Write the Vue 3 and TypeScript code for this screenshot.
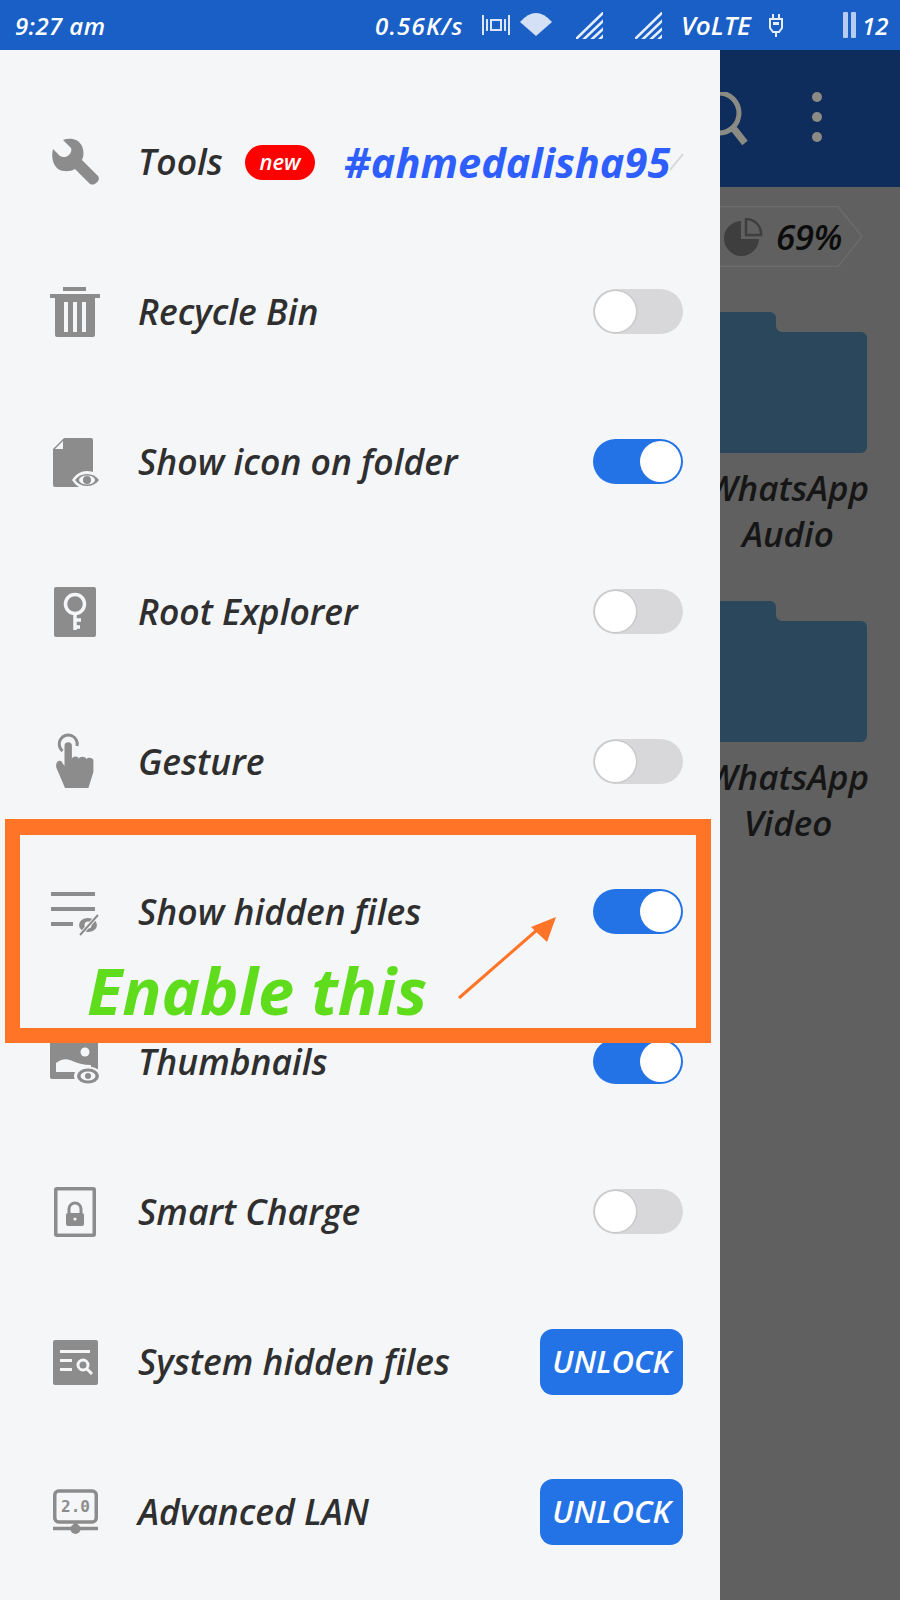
<script setup lang="ts">
type Kind = 'tools' | 'on' | 'off' | 'unlock'
interface Row { id: string; label: string; kind: Kind; width: number }
const rows: Row[] = [
  { id: 'tools', label: 'Tools', kind: 'tools', width: 82 },
  { id: 'bin', label: 'Recycle Bin', kind: 'off', width: 183 },
  { id: 'doc', label: 'Show icon on folder', kind: 'on', width: 318 },
  { id: 'key', label: 'Root Explorer', kind: 'off', width: 222 },
  { id: 'hand', label: 'Gesture', kind: 'off', width: 124 },
  { id: 'hidden', label: 'Show hidden files', kind: 'on', width: 283 },
  { id: 'thumb', label: 'Thumbnails', kind: 'on', width: 175 },
  { id: 'charge', label: 'Smart Charge', kind: 'off', width: 221 },
  { id: 'system', label: 'System hidden files', kind: 'unlock', width: 315 },
  { id: 'lan', label: 'Advanced LAN', kind: 'unlock', width: 238 }
]
const folders = [
  ['WhatsApp', 'Audio'],
  ['WhatsApp', 'Video']
]
</script>

<template>
  <div class="screen">
    <header class="status">
      <span class="st time">9:27 am</span>
      <span class="st speed">0.56K/s</span>
      <svg class="si vib" width="28" height="24" viewBox="0 0 28 24"><path d="M1 2v20M27 2v20M5 6v12M23 6v12" stroke="#dbe6f8" stroke-width="2" fill="none"/><rect x="9" y="7" width="10" height="10" fill="none" stroke="#dbe6f8" stroke-width="2"/></svg>
      <svg class="si wifi" width="32" height="24" viewBox="0 0 32 24"><path d="M0 9Q16-9 32 9L16 23z" fill="#d3e0f5"/></svg>
      <svg class="si sig1" width="27" height="27" viewBox="0 0 27 27"><path d="M-1 28 28 0M7 28 28 8M15 28 28 16M23 28l5-5" stroke="#e6eefb" stroke-width="2.600" fill="none"/></svg>
      <svg class="si sig2" width="27" height="27" viewBox="0 0 27 27"><path d="M-1 28 28 0M7 28 28 8M15 28 28 16M23 28l5-5" stroke="#e6eefb" stroke-width="2.600" fill="none"/></svg>
      <span class="st volte">VoLTE</span>
      <svg class="si plug" width="16" height="24" viewBox="0 0 16 24"><path d="M5 1v5M11 1v5M8 19v5" stroke="#e6eefb" stroke-width="2"/><path d="M2 6h12v9l-3 4H5l-3-4z" fill="none" stroke="#e6eefb" stroke-width="2"/><rect x="5" y="9" width="6" height="3" fill="#e6eefb"/></svg>
      <span class="bars"><i></i><i></i></span>
      <span class="st level">12</span>
    </header>

    <div class="body">
      <nav class="drawer">
        <div v-for="row in rows" :key="row.id" class="row">
          <svg class="icon" width="60" height="60" viewBox="0 0 60 60" fill="#8c8c8c">
            <template v-if="row.id === 'tools'">
              <path d="M17 8C24 5 33 7 36 14C38 19 38 24 36 28L52 44C54 47 52 50 50 51C48 53 45 53 43 51L29 37C24 40 17 40 12 37C7 33 5 25 7 17L14 24C17 26 21 25 23 23C25 21 26 18 25 16Z"/>
            </template>
            <template v-else-if="row.id === 'bin'">
              <rect x="17" y="5" width="23" height="4"/>
              <rect x="4" y="12" width="50" height="4"/>
              <path d="M9 16h40v37a2 2 0 0 1-2 2H11a2 2 0 0 1-2-2z"/>
              <path d="M18 20h4v30h-4zM27 20h4v30h-4zM36 20h4v30h-4z" fill="#f5f6f8"/>
            </template>
            <template v-else-if="row.id === 'doc'">
              <path d="M18 6h27a2 2 0 0 1 2 2v45a2 2 0 0 1-2 2H9a2 2 0 0 1-2-2V17z"/>
              <path d="M17 9v8H9z" fill="#f5f6f8"/>
              <path d="M26 48c4-6 9-9 15-9s11 3 15 9c-4 6-9 9-15 9s-11-3-15-9z" fill="#f5f6f8"/>
              <path d="M29 48c3-4 7-6 12-6s9 2 12 6c-3 4-7 6-12 6s-9-2-12-6z"/>
              <ellipse cx="41" cy="48" rx="8" ry="4.500" fill="#f5f6f8"/>
              <circle cx="41" cy="48" r="4"/>
            </template>
            <template v-else-if="row.id === 'key'">
              <rect x="8" y="5" width="42" height="50" rx="2"/>
              <circle cx="29" cy="22" r="9.500" fill="none" stroke="#f5f6f8" stroke-width="3.500"/>
              <path d="M29 31v17M29 38h6M29 45h5" fill="none" stroke="#f5f6f8" stroke-width="3.500"/>
            </template>
            <template v-else-if="row.id === 'hand'">
              <path d="M16.500 19A9 9 0 1 1 31 14" fill="none" stroke="#8c8c8c" stroke-width="3"/>
              <path d="M18.500 14a3.700 3.700 0 0 1 7.400 0V27c0-3.500 7-3.500 7 0c0-3 7.500-3 7.500 .5c0-2.500 7-2.500 7 1V40l-5 16H19L10.500 36c-1-3 0-6 2-7 2-.5 3 0 4 2l2 3z"/>
            </template>
            <template v-else-if="row.id === 'hidden'">
              <path d="M5 10h44v4H5zM5 25h44v4H5zM5 40h22v4H5z"/>
              <ellipse cx="42" cy="43" rx="9" ry="7"/>
              <circle cx="42" cy="43" r="3.500" fill="#f5f6f8"/>
              <path d="M34 53 52 33" stroke="#f5f6f8" stroke-width="4"/>
              <path d="M34 53 52 33" stroke="#8c8c8c" stroke-width="2"/>
            </template>
            <template v-else-if="row.id === 'thumb'">
              <rect x="4" y="5" width="48" height="42" rx="2"/>
              <circle cx="39" cy="20" r="4.500" fill="#f5f6f8"/>
              <path d="M10 40V31C14 28 19 26 24 28C30 31 38 33 45 33V40z" fill="#f5f6f8"/>
              <ellipse cx="42" cy="44" rx="14" ry="9.500" fill="#f5f6f8"/>
              <ellipse cx="42" cy="44" rx="11" ry="7.500"/>
              <ellipse cx="42" cy="44" rx="7.500" ry="4.500" fill="#f5f6f8"/>
              <circle cx="42" cy="44" r="3"/>
            </template>
            <template v-else-if="row.id === 'charge'">
              <rect x="9.750" y="6.750" width="38.500" height="46.500" rx="1" fill="none" stroke="#8c8c8c" stroke-width="3.500"/>
              <path d="M23 31v-4a6 6 0 0 1 12 0v4" fill="none" stroke="#8c8c8c" stroke-width="3"/>
              <rect x="20" y="31" width="18" height="13" rx="2"/>
              <circle cx="29" cy="37" r="1.600" fill="#f5f6f8"/>
            </template>
            <template v-else-if="row.id === 'system'">
              <rect x="7" y="8" width="45" height="45" rx="2"/>
              <path d="M14 18h30v3H14zM14 27h12v3H14zM14 36h12v3H14z" fill="#f5f6f8"/>
              <circle cx="37" cy="33" r="5" fill="none" stroke="#f5f6f8" stroke-width="3"/>
              <path d="M41 37l5 5" stroke="#f5f6f8" stroke-width="3"/>
            </template>
            <template v-else>
              <rect x="8.750" y="9" width="41.500" height="31" rx="4" fill="none" stroke="#8c8c8c" stroke-width="3.500"/>
              <text x="29.500" y="30" text-anchor="middle" class="lan-text">2.0</text>
              <path d="M7 46.500h45" stroke="#8c8c8c" stroke-width="3.500"/>
              <path d="M27.500 40h4v6h-4z"/>
              <circle cx="29.500" cy="47" r="5"/>
            </template>
          </svg>
          <span class="label" :style="{ width: row.width + 'px' }">{{ row.label }}</span>
          <template v-if="row.kind === 'tools'">
            <span class="badge">new</span>
            <span class="mark">#ahmedalisha95</span>
            <svg class="tick" width="15" height="18" viewBox="0 0 15 18"><path d="M1 17 14 1" stroke="#d9dadd" stroke-width="2"/></svg>
          </template>
          <span v-else-if="row.kind === 'unlock'" class="unlock">UNLOCK</span>
          <span v-else class="toggle" :class="row.kind"><i></i></span>
        </div>
      </nav>

      <aside class="dim">
        <div class="appbar">
          <svg class="lens" width="40" height="60" viewBox="0 0 40 60"><circle cx="-1" cy="21" r="20" fill="none" stroke="#8b8b84" stroke-width="5"/><path d="M14 37l11 14" stroke="#8b8b84" stroke-width="7"/></svg>
          <span class="dots"><i></i><i></i><i></i></span>
        </div>
        <div class="content">
          <div class="pill">
            <svg class="pill-frame" width="143" height="61" viewBox="0 0 143 61"><path d="M-5 .5H118L142 30.500 118 60.500H-5" fill="none" stroke="#6b6c6b" stroke-width="1.500"/></svg>
            <svg class="pie" width="40" height="38" viewBox="0 0 40 38"><path d="M18 3a17.500 17.500 0 1 0 18 18H18z" fill="#3e3e3e"/><path d="M23 1a15 15 0 0 1 15 16H23z" fill="none" stroke="#3e3e3e" stroke-width="2.500"/></svg>
            <span class="pct">69%</span>
          </div>
          <div v-for="(f, i) in folders" :key="i" class="folder-item">
            <svg class="folder" width="158" height="141" viewBox="0 0 158 141"><path d="M6 0h55a6 6 0 0 1 6 6v8a6 6 0 0 0 6 6h79a6 6 0 0 1 6 6v109a6 6 0 0 1-6 6H6a6 6 0 0 1-6-6V6a6 6 0 0 1 6-6z" fill="#2a475c"/></svg>
            <span class="name">{{ f[0] }}</span>
            <span class="name">{{ f[1] }}</span>
          </div>
        </div>
      </aside>
    </div>

    <div class="callout">
      <span class="enable">Enable this</span>
      <svg class="arrow" width="110" height="90" viewBox="0 0 110 90"><path d="M3 85 89 10" stroke="#ff7427" stroke-width="3" fill="none" transform="translate(0 -1)"/><path d="M100 3 75 13l16 15z" fill="#ff7427"/></svg>
    </div>
  </div>
</template>

<style>
html, body { margin: 0; background: #f5f6f8; }
</style>

<style scoped>
.screen {
  position: relative;
  width: 900px;
  height: 1600px;
  overflow: hidden;
  display: flex;
  flex-direction: column;
  font-family: "Open Sans", "Liberation Sans", sans-serif;
  font-style: italic;
  font-weight: 600;
}
.status {
  height: 50px;
  flex: none;
  display: flex;
  align-items: center;
  background: #1a5fc6;
  color: #fff;
  padding-left: 15px;
}
.st { white-space: nowrap; display: inline-block; }
.time { width: 92px; margin-right: 268px; font-size: 24px; letter-spacing: 0.4px; }
.speed { width: 97px; margin-right: 10px; font-size: 24px; letter-spacing: 1.2px; }
.si { flex: none; display: block; }
.vib { margin-right: 10px; }
.wifi { margin-right: 24px; }
.sig1 { margin-right: 32px; }
.sig2 { margin-right: 19px; }
.volte { width: 70px; margin-right: 17px; font-size: 26px; }
.plug { margin-right: 59px; }
.bars { display: flex; gap: 3px; margin-right: 9px; }
.bars i { display: block; width: 5px; height: 26px; background: #b6ccf0; border-radius: 1px; }
.level { width: 24px; font-size: 24px; margin-left: -3px; }

.body { flex: 1; display: flex; min-height: 0; }
.drawer {
  position: relative;
  z-index: 1;
  width: 720px;
  flex: none;
  box-sizing: border-box;
  padding-top: 37px;
  padding-right: 37px;
  background: #f5f6f8;
}
.row { height: 150px; display: flex; align-items: center; padding-left: 46px; }
.icon { flex: none; margin-right: 32px; }
.lan-text { font: bold 16px "DejaVu Sans Mono", monospace; fill: #8c8c8c; }
.label {
  flex: none;
  font-size: 35.5px;
  line-height: 48px;
  padding-bottom: 3px;
  color: #2f2f2f;
  white-space: nowrap;
}
.badge {
  flex: none;
  width: 70px;
  height: 35px;
  margin-left: 25px;
  border-radius: 18px;
  background: #ff0000;
  color: #fff;
  font-size: 22px;
  line-height: 33px;
  text-align: center;
}
.mark {
  flex: none;
  width: 328px;
  margin-left: 29px;
  font-size: 41.5px;
  line-height: 50px;
  font-weight: 700;
  color: #2f5eff;
  white-space: nowrap;
}
.tick { flex: none; margin-left: -3px; }
.toggle {
  margin-left: auto;
  margin-top: -1px;
  box-sizing: border-box;
  width: 90px;
  height: 45px;
  border-radius: 23px;
  display: flex;
  align-items: center;
  padding: 0 2px;
}
.toggle i {
  display: block;
  width: 41px;
  height: 41px;
  border-radius: 50%;
  background: #fff;
}
.toggle.off { background: #d8d8da; }
.toggle.off i { box-shadow: 0 0 0 1.5px #c9c9c9; }
.toggle.on { background: #2473e6; justify-content: flex-end; }
.unlock {
  margin-left: auto;
  width: 143px;
  height: 66px;
  border-radius: 13px;
  background: #2473e6;
  color: #fff;
  font-size: 31px;
  line-height: 64px;
  text-align: center;
}

.dim { flex: 1; min-width: 0; display: flex; flex-direction: column; background: #5f605f; }
.appbar {
  position: relative;
  height: 137px;
  flex: none;
  background: #0e2d5c;
  display: flex;
  align-items: flex-start;
}
.lens { margin-top: 42px; flex: none; }
.dots { display: flex; flex-direction: column; gap: 10px; margin: 42px 0 0 52px; }
.dots i { display: block; width: 10px; height: 10px; border-radius: 50%; background: #8b8b84; }
.content { flex: 1; display: flex; flex-direction: column; }
.pill {
  position: relative;
  height: 61px;
  margin-top: 19px;
  width: 143px;
  display: flex;
  align-items: center;
  gap: 13px;
  padding-left: 3px;
  box-sizing: border-box;
  flex: none;
}
.pill-frame { position: absolute; left: 0; top: 0; }
.pie { flex: none; }
.pct { font-size: 35px; color: #0c0c0c; position: relative; letter-spacing: -0.5px; }
.folder-item {
  display: flex;
  flex-direction: column;
  align-items: center;
  width: 158px;
  height: 289px;
  margin-left: -11px;
  flex: none;
}
.pill + .folder-item { margin-top: 45px; }
.folder { display: block; margin-bottom: 12px; flex: none; }
.name { font-size: 35px; line-height: 46px; color: #161616; white-space: nowrap; }

.callout {
  position: absolute;
  left: 5px;
  top: 819px;
  width: 706px;
  height: 224px;
  box-sizing: border-box;
  border: solid #ff7427;
  border-width: 16px 15px 15px;
  z-index: 2;
}
.enable {
  position: absolute;
  left: 67px;
  top: 117px;
  font-size: 65px;
  line-height: 76px;
  font-weight: 700;
  color: #5fdd1c;
  white-space: nowrap;
}
.arrow { position: absolute; left: 436px; top: 79px; }
</style>
